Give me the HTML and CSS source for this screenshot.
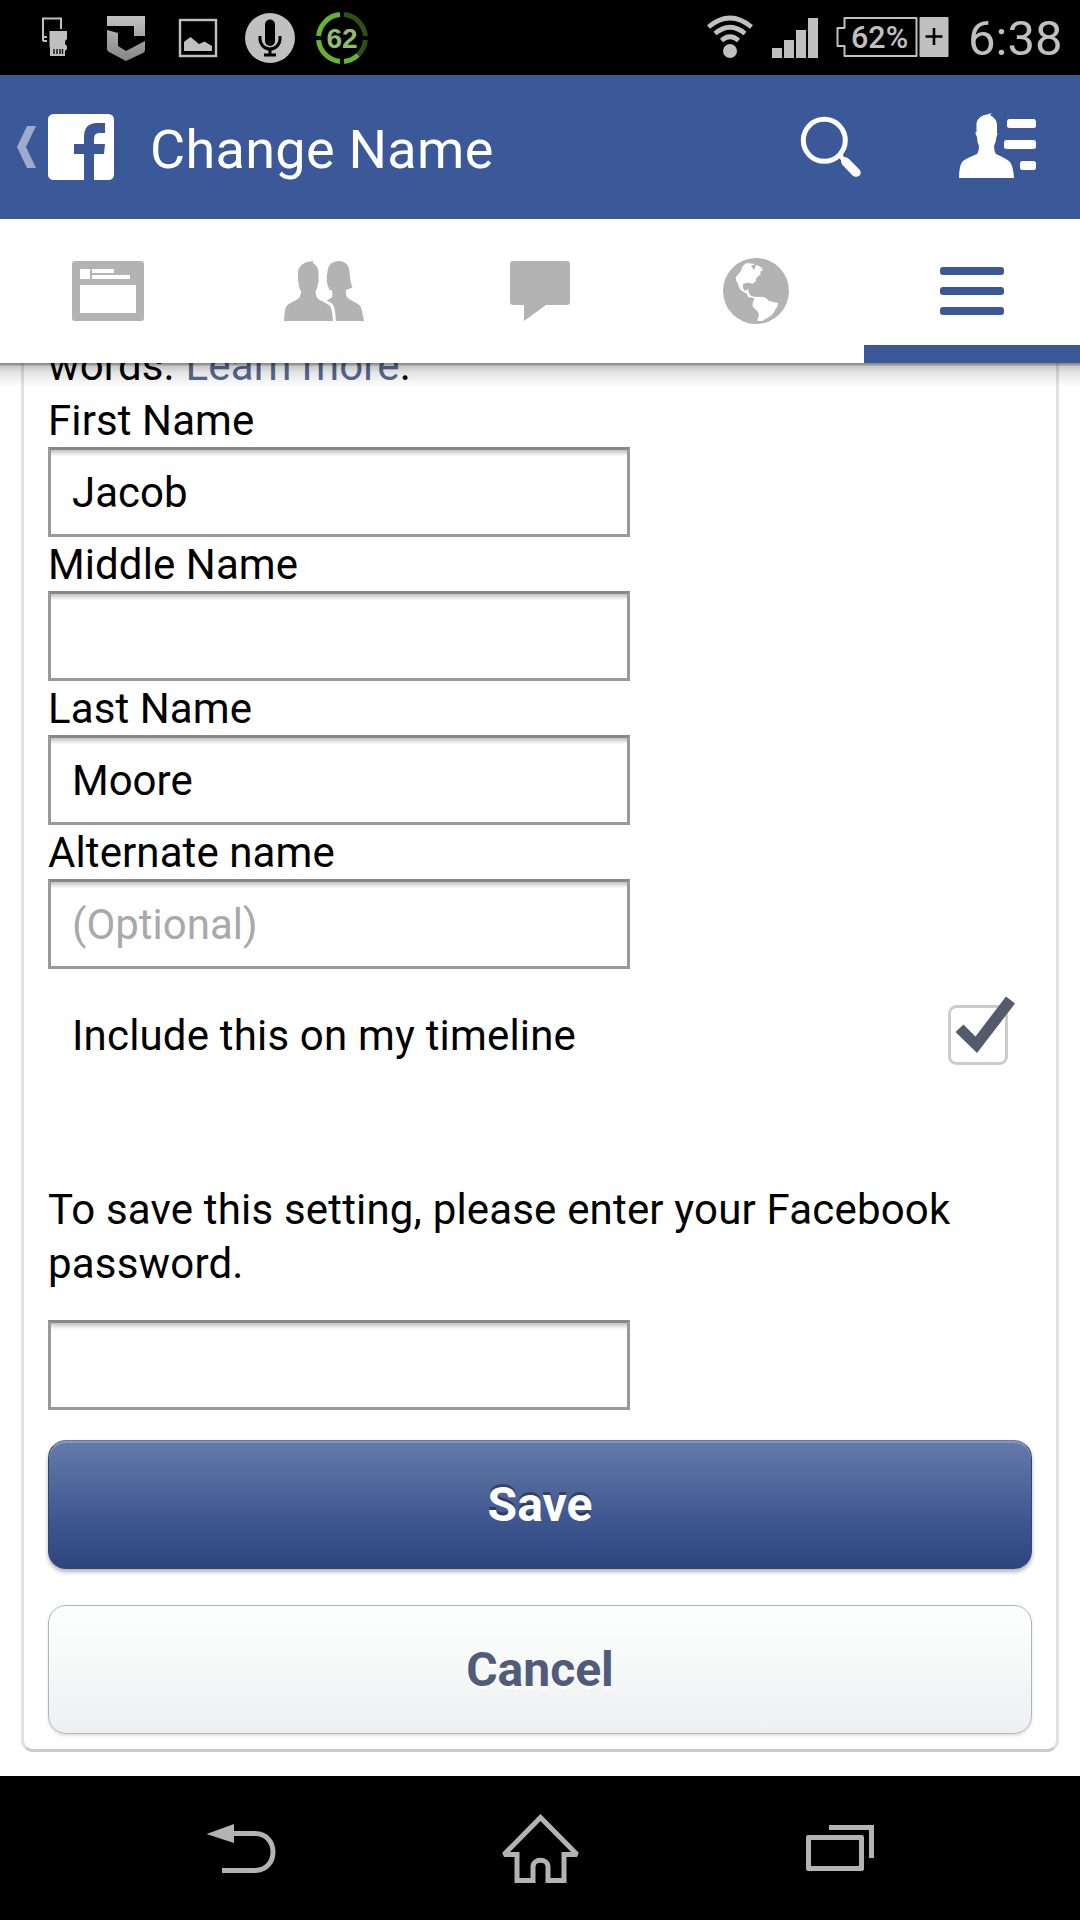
FILE: index.html
```html
<!DOCTYPE html>
<html lang="en">
<head>
    <meta charset="utf-8">
    <title>Change Name</title>
    <link rel="stylesheet" href="styles.css">
</head>
<body>
    <div class="status-bar">
        <div class="status-left">
            <svg width="72" height="75" viewBox="18 0 72 75">
                <path d="M43 41V18.500H61V29M43 41H47M44 37H47" fill="none" stroke="#c0c0c0" stroke-width="2"/>
                <path d="M49.500 31H67V39L65 41V44L67 46V49L65 51V56H50V47H49.500Z" fill="#c0c0c0"/>
                <path d="M54 49V54M57 49V54M60 49V54M62.500 49V54" stroke="#000" stroke-width="1.300"/>
            </svg>
            <svg width="72" height="75" viewBox="90 0 72 75">
                <defs>
                    <linearGradient id="shield" x1="0" y1="0" x2="0" y2="1">
                        <stop offset="0" stop-color="#c2c2c2"/>
                        <stop offset="1" stop-color="#858585"/>
                    </linearGradient>
                </defs>
                <path d="M107 16H145V36H134V26H107ZM107 30L118 33V46L126 51L145 41V50Q145 52 143 53L126 61L109 52Q107 51 107 49Z" fill="url(#shield)"/>
            </svg>
            <svg width="72" height="75" viewBox="162 0 72 75">
                <rect x="180" y="20" width="36" height="36" fill="none" stroke="#c0c0c0" stroke-width="2.400"/>
                <path d="M184 51V42L190.500 37L199 44L204.500 41.500L212 46V51Z" fill="#c0c0c0"/>
            </svg>
            <svg width="72" height="75" viewBox="234 0 72 75">
                <circle cx="270" cy="38" r="25" fill="#c0c0c0"/>
                <rect x="265" y="19.500" width="10" height="26.500" rx="5" fill="#000"/>
                <path d="M260 36V39A10 10 0 0 0 280 39V36M270 49V55M264 55H276" fill="none" stroke="#000" stroke-width="3"/>
            </svg>
            <svg width="72" height="75" viewBox="306 0 72 75">
                <path d="M344 14.600A23.500 23.500 0 0 1 365.400 36M365.400 40A23.500 23.500 0 0 1 358 55" fill="none" stroke="#2e4f18" stroke-width="5"/>
                <path d="M318.600 36A23.500 23.500 0 0 1 340 14.600M318.600 40A23.500 23.500 0 0 0 340 61.400M344 61.400A23.500 23.500 0 0 0 358 55" fill="none" stroke="#66b332" stroke-width="5"/>
                <text x="342" y="48" class="ring-text">62</text>
            </svg>
        </div>
        <div class="status-right">
            <svg width="48" height="75" viewBox="706 0 48 75">
                <circle cx="730" cy="51" r="7" fill="#c0c0c0"/>
                <path d="M708.500 27Q730 9 751.500 27M715 33.500Q730 21 745 33.500M721.500 40.500Q730 33 738.500 40.500" fill="none" stroke="#c0c0c0" stroke-width="4.600"/>
            </svg>
            <svg width="46" height="75" viewBox="772 0 46 75">
                <path d="M772 48H782V58H772ZM784 40H794V58H784ZM796 30H806V58H796ZM808 18H818V58H808Z" fill="#c0c0c0"/>
            </svg>
            <svg width="114" height="75" viewBox="835.500 0 114 75">
                <path d="M844 18H916V56H844V46H837V28H844Z" fill="none" stroke="#c0c0c0" stroke-width="2" stroke-linejoin="round"/>
                <rect x="919" y="17" width="29" height="40" rx="1" fill="#c0c0c0"/>
                <path d="M925 36.500H942M933.500 28V45" stroke="#000" stroke-width="2.600"/>
                <text x="850.500" y="48" class="battery-text">62%</text>
            </svg>
            <span class="clock">6:38</span>
        </div>
    </div>

    <div class="header">
        <svg class="back" width="20" height="42" viewBox="0 0 20 42">
            <path d="M10 0H19L9 21L19 42H10L0 21Z" fill="#9daccd"/>
        </svg>
        <svg class="logo" width="66" height="66" viewBox="0 0 66 66">
            <rect width="66" height="66" rx="5.500" fill="#fff"/>
            <path d="M36 66V40H26V30H36V23Q36 9 49 9H57V19H51Q46 19 46 25V30H57L56 40H46V66Z" fill="#3b5998"/>
        </svg>
        <h1>Change Name</h1>
        <svg class="search" width="62" height="62" viewBox="0 0 62 62">
            <circle cx="24.300" cy="24.300" r="21" fill="none" stroke="#fff" stroke-width="5"/>
            <path d="M38 41L42 37L44 41Q47 41 49 43L59.500 53.500Q62 57 59.500 59.500Q56 62 52.500 59.500L42.500 49Q41 47 41 44Z" fill="#fff"/>
        </svg>
        <svg class="contacts" width="78" height="66" viewBox="0 0 78 66">
            <path d="M0 65Q0 52 4 48Q8 45 18 41Q20 38 20 33Q18 29 18 24Q16 21 16.500 19H17.500V10Q19 3 28 1.500L33 0L31 2Q38 6 38 12V19Q39 21 37.500 24Q37 29 35 33Q35 38 37 41Q46 45 50 48Q54 51 55 65Z" fill="#fff"/>
            <rect x="48" y="6" width="29" height="9" rx="2.500" fill="#fff"/>
            <rect x="45" y="27" width="32" height="9" rx="2.500" fill="#fff"/>
            <rect x="61" y="48" width="16" height="9" rx="2.500" fill="#fff"/>
        </svg>
    </div>

    <div class="tabs">
        <div class="tab">
            <svg width="72" height="60" viewBox="0 0 72 60">
                <rect width="72" height="60" rx="3" fill="#b3b3b3"/>
                <path d="M8 8H18V18H8ZM20 8H42V12H20ZM20 14H58V18H20ZM8 24H64V52H8Z" fill="#fff"/>
            </svg>
        </div>
        <div class="tab">
            <svg width="80" height="60" viewBox="0 0 80 60">
                <path d="M42 27.500L46 29.500Q41 22 43.500 10Q45 0 55 0Q64 0 65.500 10Q66 21 68.500 26.500L62 29V33Q62 36 65 38L74 43Q76.500 44.500 77.500 48L80 60H51.800Q51.500 47 48.500 43Q46 40.500 42.500 39.500L48 36.500Q49 33 48 29.500Z" fill="#b3b3b3"/>
                <path d="M0 60Q.5 48 2.500 45Q4 43 14 38Q17 35 17 30Q15 28 14.500 21Q13 19 14 17.500V10Q16 2.500 25 .5L30 0L28.500 1.500Q34 5 34.500 11V17.500Q35.500 19 34 22Q33.500 28 31.500 30Q31.500 35 34 38Q44 43 46 45Q48.500 49 49 60Z" fill="#b3b3b3"/>
            </svg>
        </div>
        <div class="tab">
            <svg width="60" height="60" viewBox="0 0 60 60">
                <path d="M3 0H57Q60 0 60 3V41Q60 44 57 44H36L14 60V44H3Q0 44 0 41V3Q0 0 3 0Z" fill="#b3b3b3"/>
            </svg>
        </div>
        <div class="tab">
            <svg width="66" height="66" viewBox="0 0 66 66">
                <circle cx="33" cy="33" r="33" fill="#b3b3b3"/>
                <path d="M13 19L18 13Q19 7 24 5L32 6L28 8L31 12L33 7Q38 8 40 12L37 14L38 16Q32 20 33 23L29 26L30 28L28 25Q25 24 20 26L20 30L22 33L25 31L26 35L28 38L33 39Q39 38 43 40L46 43L55 45Q55 49 52 52Q50 57 46 59L39 63L34 63L36 57Q36 54 31 50Q28 47 31 42V40L25 39L24 36L19 33Q16 31 15 26Q12 22 13 19Z" fill="#fff"/>
            </svg>
        </div>
        <div class="tab active">
            <svg width="64" height="48" viewBox="0 0 64 48">
                <rect width="64" height="8" rx="3" fill="#3b5998"/>
                <rect y="20" width="64" height="8" rx="3" fill="#3b5998"/>
                <rect y="40" width="64" height="8" rx="3" fill="#3b5998"/>
            </svg>
        </div>
    </div>

    <div class="content">
        <form class="card">
            <p class="intro">words. <a href="#">Learn more</a>.</p>
            <label for="first-name">First Name</label>
            <input type="text" id="first-name" value="Jacob">
            <label for="middle-name">Middle Name</label>
            <input type="text" id="middle-name">
            <label for="last-name">Last Name</label>
            <input type="text" id="last-name" value="Moore">
            <label for="alternate-name">Alternate name</label>
            <input type="text" id="alternate-name" placeholder="(Optional)">
            <div class="timeline">
                <span>Include this on my timeline</span>
                <svg width="68" height="70" viewBox="948 996 68 70">
                    <rect x="949.500" y="1006.500" width="57" height="57" rx="7" fill="#fff" stroke="#ccc" stroke-width="3"/>
                    <path d="M955.500 1032L963.500 1024.500L975.500 1036.500L1006 996.500L1015 1003.500L977 1053Z" fill="#525a6c"/>
                </svg>
            </div>
            <p class="note">To save this setting, please enter your Facebook password.</p>
            <input type="password" id="password">
            <button type="button" class="btn save">Save</button>
            <button type="button" class="btn cancel">Cancel</button>
        </form>
    </div>

    <div class="nav-bar">
        <svg width="70" height="50" viewBox="206 1824 70 50">
            <path d="M206.500 1834L234 1824V1843Z" fill="#b3b3b3"/>
            <path d="M232 1833.500H255C279 1833.500 279 1870.500 255 1870.500H222" fill="none" stroke="#b3b3b3" stroke-width="5"/>
        </svg>
        <svg width="80" height="70" viewBox="500.500 1814 80 70">
            <path d="M540 1817.500L503.500 1854.500H516.500V1880.500H532.500V1867C532.500 1858 547.500 1858 547.500 1867V1880.500H563.500V1854.500H576.500Z" fill="none" stroke="#b3b3b3" stroke-width="5" stroke-miterlimit="2"/>
        </svg>
        <svg width="70" height="50" viewBox="805 1824 70 50">
            <rect x="808.500" y="1837.500" width="53" height="31" fill="none" stroke="#b3b3b3" stroke-width="5" stroke-linejoin="round"/>
            <path d="M829 1827.500H871.500V1858" fill="none" stroke="#b3b3b3" stroke-width="5"/>
        </svg>
    </div>
</body>
</html>
```
FILE: styles.css
```css
* {
    box-sizing: border-box;
}
body {
    margin: 0;
    width: 1080px;
    height: 1920px;
    overflow: hidden;
    display: flex;
    flex-direction: column;
    font-family: Roboto, sans-serif;
    font-size: 42px;
    line-height: 54px;
    color: #000;
    background: #fff;
}
svg {
    display: block;
    flex: none;
}
.status-bar {
    height: 75px;
    background: #000;
    display: flex;
    justify-content: space-between;
    padding: 0 20px 0 18px;
}
.status-left, .status-right {
    display: flex;
}
.status-right {
    gap: 18px;
}
.ring-text {
    font: bold 28px "Liberation Sans", sans-serif;
    fill: #91bd6c;
    text-anchor: middle;
}
.battery-text {
    font: 500 30.5px Roboto, sans-serif;
    fill: #c0c0c0;
}
.clock {
    width: 92px;
    color: #c0c0c0;
    font-size: 49px;
    line-height: 78px;
    text-align: right;
    white-space: nowrap;
}
.header {
    height: 144px;
    background: #3b5998;
    display: flex;
    align-items: center;
    padding: 0 43px 0 17px;
}
.logo {
    margin-left: 11px;
}
.header h1 {
    flex: 1;
    margin: 5px 0 0 36px;
    color: #fff;
    font-size: 54px;
    font-weight: 400;
    line-height: 64px;
    letter-spacing: 0.3px;
}
.search {
    margin-right: 97px;
}
.contacts {
    margin-bottom: 2px;
}
.tabs {
    position: relative;
    height: 144px;
    background: #fff;
    display: flex;
}
/* shadow cast on the scrolled page */
.tabs::after {
    content: "";
    position: absolute;
    top: 144px;
    left: 0;
    width: 100%;
    height: 24px;
    background: linear-gradient(rgba(0, 0, 0, 0.46) 0, rgba(0, 0, 0, 0.4) 2px, rgba(0, 0, 0, 0.22) 3px, rgba(0, 0, 0, 0.1) 10px, transparent);
}
.tab {
    width: 216px;
    display: flex;
    align-items: center;
    justify-content: center;
}
.tab.active {
    border-bottom: 18px solid #3b5998;
    padding-top: 18px;
}
.content {
    height: 1413px;
    overflow: hidden;
    padding: 0 21px;
}
/* scrolled up by part of a line */
.card {
    height: 1413px;
    margin-top: -24px;
    border: 3px solid #e1e1e1;
    border-top: none;
    border-bottom-color: #ccc;
    border-radius: 0 0 12px 12px;
    padding: 0 24px;
}
.card p {
    margin: 0;
    letter-spacing: 0.18px;
}
.card a {
    color: #576b95;
    text-decoration: none;
}
.card label {
    display: block;
    height: 54px;
    padding-top: 1px;
    letter-spacing: 0.1px;
}
.card input {
    display: block;
    width: 582px;
    height: 90px;
    padding: 0 21px;
    border: 3px solid #999;
    border-top-color: #888;
    border-radius: 0;
    background: #fff;
    box-shadow: inset 0 6px 4px -3px rgba(0, 0, 0, 0.25);
    color: #000;
    font: 42px Roboto, sans-serif;
}
.card input::placeholder {
    color: #a9a9a9;
}
.timeline {
    display: flex;
    align-items: center;
    justify-content: space-between;
    margin-top: 27px;
    padding: 0 16px 0 24px;
    height: 80px;
    letter-spacing: 0.18px;
}
.timeline svg {
    margin-bottom: 10px;
}
.card .note {
    margin-top: 107px;
    margin-bottom: 29px;
}
.btn {
    display: block;
    width: 100%;
    height: 129px;
    border-radius: 18px;
    font: bold 48px Roboto, sans-serif;
}
.save {
    margin-top: 30px;
    border: 1px solid #29447e;
    border-top-color: #6d7a9c;
    background: linear-gradient(#647aab, #50679a 35%, #3f5791 62%, #2b457d);
    box-shadow: inset 0 2px 0 #8496be, 0 3px 4px rgba(0, 0, 0, 0.3);
    color: #fff;
    text-shadow: 0 -3px 0 rgba(0, 0, 0, 0.35);
}
.cancel {
    margin-top: 36px;
    border: 1px solid #b4b4b4;
    background: linear-gradient(#fdfffe, #f8f9f9 40%, #eeeff1);
    box-shadow: 0 2px 3px rgba(0, 0, 0, 0.12);
    color: #505c7a;
    text-shadow: 0 3px 0 #fff;
}
.nav-bar {
    height: 144px;
    background: #000;
    display: flex;
    align-items: center;
    justify-content: space-between;
    padding: 2px 205px 0 206px;
}
```
